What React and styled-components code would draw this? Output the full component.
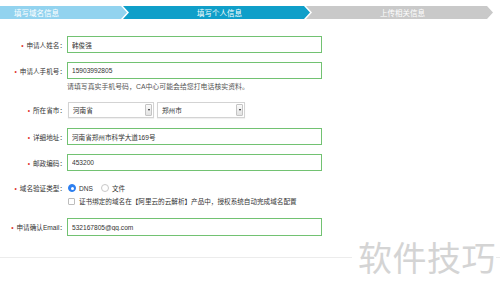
import styled, { createGlobalStyle } from "styled-components";

const GlobalStyle = createGlobalStyle`
  html, body {
    margin: 0;
    padding: 0;
    background: #fff;
    font-family: "Liberation Sans", "Noto Sans CJK SC", sans-serif;
    color: #333;
    overflow: hidden;
  }
`

const Page = styled.div`
  position: relative;
  width: 500px;
  height: 301px;
  overflow: hidden;
`

const StepBar = styled.div`
  display: flex;
  margin-top: 6px;
  margin-left: -60px;
  height: 13px;
`

const Step = styled.div`
  flex: 0 0 187px;
  height: 100%;
  margin-right: -4px;
  display: flex;
  align-items: center;
  justify-content: center;
  color: #fff;
  font-size: 7.5px;
  background: ${(props) => props.color};
  clip-path: ${(props) => props.first
    ? "polygon(0 0, calc(100% - 6px) 0, 100% 50%, calc(100% - 6px) 100%, 0 100%)"
    : "polygon(0 0, calc(100% - 6px) 0, 100% 50%, calc(100% - 6px) 100%, 0 100%, 6px 50%)"};
  span{
    padding-left: 6px;
  }
`

const Form = styled.div`
  display: flex;
  flex-direction: column;
  margin-top: 17px;
`

const Row = styled.div`
  display: grid;
  grid-template-columns: 66px auto;
  column-gap: 1px;
  align-items: center;
  height: ${(props) => props.h || 17}px;
  margin-top: ${(props) => props.mt || 0}px;
`

const Label = styled.div`
  text-align: right;
  font-size: 6.6px;
  color: #333;
  white-space: nowrap;
  &::before{
    content: "•";
    color: #e0322b;
    margin-right: 3px;
  }
`

const TextInput = styled.input`
  box-sizing: border-box;
  width: 255px;
  height: ${(props) => props.h || 17}px;
  border: 1px solid #72c272;
  padding: 0 4px;
  margin: 0;
  font-family: inherit;
  font-size: 6.6px;
  color: #333;
  background: #fff;
  outline: none;
`

const Hint = styled.div`
  margin: 3px 0 0 67px;
  height: 10px;
  line-height: 10px;
  font-size: 6.9px;
  color: #555;
`

const Selects = styled.div`
  display: flex;
  gap: 3px;
  padding-left: 1px;
`

const Select = styled.div`
  box-sizing: border-box;
  width: ${(props) => props.w}px;
  height: 16px;
  border: 1px solid #d3d3d3;
  box-shadow: 0 1px 1px rgba(0,0,0,0.06);
  display: flex;
  align-items: center;
  justify-content: space-between;
  font-size: 6.6px;
  color: #333;
  padding-left: 4px;
  .arrow{
    box-sizing: border-box;
    width: 7px;
    height: 12px;
    margin-right: 1px;
    border: 1px solid #c4c4c4;
    border-radius: 1px;
    background: linear-gradient(#fafafa, #e2e2e2);
    display: flex;
    align-items: center;
    justify-content: center;
  }
  .arrow::after{
    content: "";
    border-left: 1.5px solid transparent;
    border-right: 1.5px solid transparent;
    border-top: 2px solid #222;
  }
`

const Options = styled.div`
  display: flex;
  align-items: center;
  gap: 3px;
  font-size: 6.6px;
  color: #333;
  padding-left: 1px;
`

const Radio = styled.span`
  box-sizing: border-box;
  width: 8px;
  height: 8px;
  border-radius: 50%;
  display: inline-flex;
  align-items: center;
  justify-content: center;
  border: 1px solid ${(props) => props.checked ? "#2d7ff0" : "#c8c8c8"};
  background: ${(props) => props.checked ? "#2d7ff0" : "#fff"};
  margin-left: ${(props) => props.checked ? "0" : "5px"};
  &::after{
    content: "";
    width: 3px;
    height: 3px;
    border-radius: 50%;
    background: ${(props) => props.checked ? "#fff" : "transparent"};
  }
`

const Checkbox = styled.span`
  box-sizing: border-box;
  width: 7px;
  height: 7px;
  border: 1px solid #bdbdbd;
  border-radius: 1px;
  background: #fff;
  margin-right: 1px;
`

const Divider = styled.div`
  margin-top: 21px;
  height: 1px;
  background: #ececec;
`

const Watermark = styled.div`
  position: absolute;
  left: 352px;
  top: 236px;
  padding-left: 6px;
  background: #fff;
  font-family: "Noto Sans CJK SC", sans-serif;
  font-size: 34px;
  line-height: 42px;
  color: #d4d4d4;
  letter-spacing: 0.5px;
`

export default function App() {
  return (
    <Page>
      <GlobalStyle />
      <StepBar>
        <Step first color="#92d3ef"><span>填写域名信息</span></Step>
        <Step color="#0f9fc9"><span>填写个人信息</span></Step>
        <Step color="#c9c9c9"><span>上传相关信息</span></Step>
      </StepBar>

      <Form>
        <Row>
          <Label>申请人姓名：</Label>
          <TextInput readOnly value="韩俊强" />
        </Row>
        <Row mt={9}>
          <Label>申请人手机号：</Label>
          <TextInput readOnly value="15903992805" />
        </Row>
        <Hint>请填写真实手机号码，CA中心可能会给您打电话核实资料。</Hint>
        <Row mt={10} h={16}>
          <Label>所在省市：</Label>
          <Selects>
            <Select w={86}>河南省<span className="arrow" /></Select>
            <Select w={88}>郑州市<span className="arrow" /></Select>
          </Selects>
        </Row>
        <Row mt={10}>
          <Label>详细地址：</Label>
          <TextInput readOnly value="河南省郑州市科学大道169号" />
        </Row>
        <Row mt={9}>
          <Label>邮政编码：</Label>
          <TextInput readOnly value="453200" />
        </Row>
        <Row mt={12} h={10}>
          <Label>域名验证类型：</Label>
          <Options>
            <Radio checked />DNS
            <Radio />文件
          </Options>
        </Row>
        <Row mt={3} h={10}>
          <div />
          <Options>
            <Checkbox />
            证书绑定的域名在【阿里云的云解析】产品中，授权系统自动完成域名配置
          </Options>
        </Row>
        <Row mt={12} h={18}>
          <Label>申请确认Email：</Label>
          <TextInput h={18} readOnly value="532167805@qq.com" />
        </Row>
      </Form>
      <Divider />
      <Watermark>软件技巧</Watermark>
    </Page>
  )
}
